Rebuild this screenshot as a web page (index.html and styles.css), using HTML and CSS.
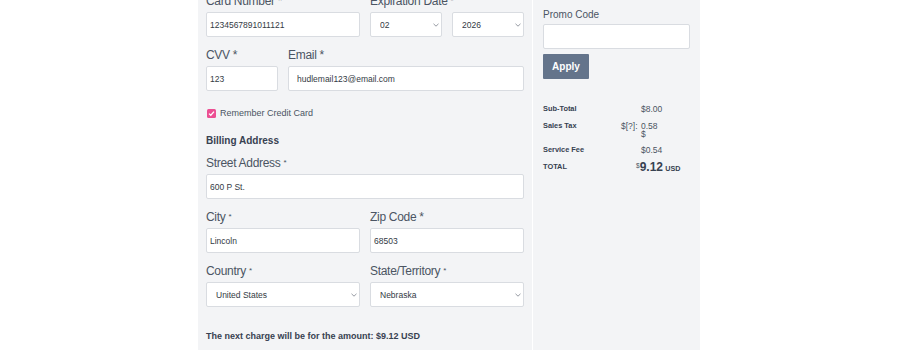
FILE: index.html
```html
<!DOCTYPE html>
<html lang="en">
<head>
<meta charset="utf-8">
<title>Payment</title>
<link rel="stylesheet" href="styles.css">
</head>
<body>
<div class="page">
  <section class="payment">
    <div class="grid">
      <div class="field span2">
        <label>Card Number <span class="req">*</span></label>
        <input class="input tight" value="1234567891011121">
      </div>
      <div class="field span2">
        <label>Expiration Date <span class="req dot">*</span></label>
        <div class="pair">
          <div class="select"><select><option>02</option></select><svg class="chev" viewBox="0 0 6 4"><path d="M0.5 0.8 L3 3.2 L5.5 0.8"/></svg></div>
          <div class="select"><select><option>2026</option></select><svg class="chev" viewBox="0 0 6 4"><path d="M0.5 0.8 L3 3.2 L5.5 0.8"/></svg></div>
        </div>
      </div>
      <div class="field">
        <label>CVV <span class="req">*</span></label>
        <input class="input tight" value="123">
      </div>
      <div class="field span3">
        <label>Email <span class="req">*</span></label>
        <input class="input wide" value="hudlemail123@email.com">
      </div>
    </div>

    <div class="remember">
      <span class="check"><svg viewBox="0 0 9 9"><path d="M2 4.6 L3.8 6.3 L7 2.6"/></svg></span>
      <span>Remember Credit Card</span>
    </div>

    <h3 class="heading">Billing Address</h3>

    <div class="grid">
      <div class="field span4">
        <label>Street Address <span class="req dot">*</span></label>
        <input class="input tight" value="600 P St.">
      </div>
      <div class="field span2">
        <label>City <span class="req dot">*</span></label>
        <input class="input tight" value="Lincoln">
      </div>
      <div class="field span2">
        <label>Zip Code <span class="req">*</span></label>
        <input class="input tight" value="68503">
      </div>
      <div class="field span2">
        <label>Country <span class="req dot">*</span></label>
        <div class="select"><select><option>United States</option></select><svg class="chev" viewBox="0 0 6 4"><path d="M0.5 0.8 L3 3.2 L5.5 0.8"/></svg></div>
      </div>
      <div class="field span2">
        <label>State/Territory <span class="req dot">*</span></label>
        <div class="select"><select><option>Nebraska</option></select><svg class="chev" viewBox="0 0 6 4"><path d="M0.5 0.8 L3 3.2 L5.5 0.8"/></svg></div>
      </div>
    </div>

    <p class="next">The next charge will be for the amount: $9.12 USD</p>
  </section>

  <aside class="summary">
    <label class="promo-label">Promo Code</label>
    <input class="input promo">
    <button class="apply">Apply</button>

    <div class="totals">
      <div class="row"><span class="k">Sub-Total</span><span class="p"></span><span class="v">$8.00</span></div>
      <div class="row"><span class="k">Sales Tax</span><span class="p">$[?]:</span><span class="v narrow">0.58 $</span></div>
      <div class="row"><span class="k">Service Fee</span><span class="p"></span><span class="v">$0.54</span></div>
      <div class="row total"><span class="k">TOTAL</span><span class="p"></span><span class="v"><sup class="cur">$</sup><b class="amt">9.12</b> <b class="usd">USD</b></span></div>
    </div>
  </aside>
</div>
</body>
</html>
```

FILE: styles.css
```css
* { box-sizing: border-box; }

html, body {
  margin: 0;
  background: #ffffff;
  overflow: hidden;
}

body {
  font-family: "Liberation Sans", Arial, Helvetica, sans-serif;
  color: #4b5563;
}

.page {
  display: flex;
  align-items: flex-start;
  margin: -6px 0 0 198px;
  width: 502px;
}

.payment {
  width: 334px;
  background: #f3f4f6;
  padding: 0 8px 40px;
}

.summary {
  width: 167px;
  margin-left: 1px;
  background: #f3f4f6;
  padding: 15px 10px 400px;
  display: flex;
  flex-direction: column;
  align-items: flex-start;
}

.grid {
  display: grid;
  grid-template-columns: repeat(4, 1fr);
  column-gap: 10px;
  row-gap: 11px;
}

.span2 { grid-column: span 2; }
.span3 { grid-column: span 3; }
.span4 { grid-column: span 4; }

.field label {
  display: block;
  font-size: 12px;
  line-height: 14px;
  letter-spacing: -0.3px;
  margin-bottom: 4px;
  color: #4b5563;
}

.req { letter-spacing: 0; }
.req.dot { font-size: 8px; vertical-align: 2px; }

.input,
.select select {
  display: block;
  width: 100%;
  height: 25px;
  border: 1px solid #d9dce1;
  border-radius: 2px;
  background: #ffffff;
  font-family: "Liberation Sans", Arial, sans-serif;
  font-size: 8.5px;
  color: #333a44;
  outline: none;
  margin: 0;
}

.input.tight { padding: 0 3px; }
.input.wide { padding: 0 8px; }

.pair {
  display: grid;
  grid-template-columns: 1fr 1fr;
  column-gap: 10px;
}

.select { position: relative; }

.select select {
  appearance: none;
  -webkit-appearance: none;
  padding: 0 9px;
}

.chev {
  position: absolute;
  right: 3px;
  top: 11px;
  width: 6px;
  height: 4px;
  fill: none;
  stroke: #8a8f98;
  stroke-width: 0.9;
}

.remember {
  display: flex;
  align-items: center;
  gap: 4px;
  margin-top: 16px;
  height: 12px;
  font-size: 9px;
  color: #4b5563;
}

.check {
  width: 9px;
  height: 9px;
  margin-left: 1px;
  border-radius: 1.5px;
  background: #ec4f93;
  display: flex;
}

.check svg {
  width: 9px;
  height: 9px;
  fill: none;
  stroke: #ffffff;
  stroke-width: 1.3;
}

.heading {
  margin: 16px 0 9px;
  font-size: 10px;
  line-height: 12px;
  font-weight: bold;
  color: #374151;
}

.next {
  margin: 24px 0 0;
  font-size: 9px;
  line-height: 11px;
  font-weight: bold;
  color: #374151;
}

.promo-label {
  font-size: 10px;
  line-height: 12px;
  color: #4b5563;
  margin-bottom: 3px;
}

.input.promo {
  width: 147px;
  padding: 0 6px;
}

.apply {
  margin-top: 5px;
  width: 46px;
  height: 25px;
  border: none;
  border-radius: 1px;
  background: #64748b;
  color: #ffffff;
  font-family: "Liberation Sans", Arial, sans-serif;
  font-weight: bold;
  font-size: 10px;
  padding: 0;
}

.totals {
  margin-top: 21px;
  width: 100%;
}

.row {
  display: grid;
  grid-template-columns: 78px 20px auto;
  align-items: start;
  padding: 4.5px 0;
  line-height: 8px;
}

.row:nth-child(2) { padding-bottom: 3.5px; }

.k {
  font-size: 7.4px;
  font-weight: bold;
  color: #374151;
}

.p, .v {
  font-size: 8.5px;
  color: #4b5563;
}

.v.narrow { width: 22px; }

.total .v { margin-left: -5px; white-space: nowrap; }

.cur {
  font-size: 6.5px;
  vertical-align: 3px;
  line-height: 0;
}

.amt {
  font-size: 12px;
  color: #374151;
}

.usd {
  font-size: 7.2px;
  color: #374151;
}
```
